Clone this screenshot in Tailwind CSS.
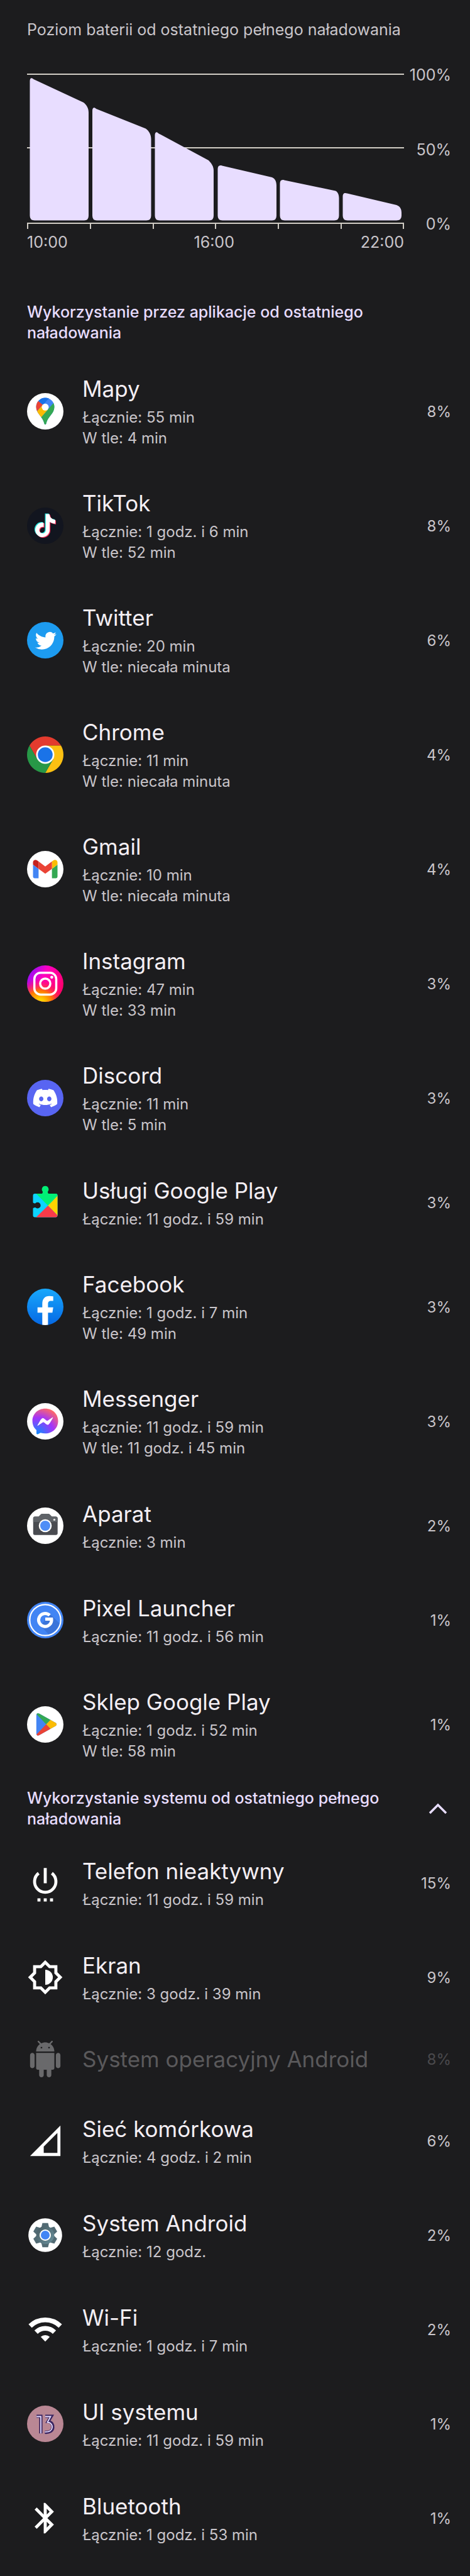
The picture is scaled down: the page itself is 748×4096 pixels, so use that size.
<!DOCTYPE html>
<html lang="pl">
<head>
  <meta charset="UTF-8">
  <meta name="viewport" content="width=device-width, initial-scale=1.0">
  <title>Wykorzystanie baterii</title>
  <script src="https://cdn.jsdelivr.net/npm/@tailwindcss/browser@4"></script>
</head>
<body class="min-h-screen bg-[#1c1c1e] font-[Inter,Roboto,sans-serif] text-2xl leading-[33px] text-[#c9c5ca]">
  <main class="pl-[43px] pr-[30px] pt-[31px]">

    <!-- Wykres baterii -->
    <h1 class="text-[25px]">Poziom baterii od ostatniego pełnego naładowania</h1>

    <section class="mt-[39px] flex text-[25px]" aria-label="Wykres poziomu baterii">
      <div class="grow pt-[14px]">
        <svg class="block w-full" viewBox="0 0 600 248" fill="none">
          <g stroke="#d0ccc4" stroke-width="2">
            <path d="M0 1H600M0 118H600M0 238H600" />
            <path d="M1 238V247M101 238V247M201 238V247M300 238V247M400 238V247M500 238V247M599 238V247" />
          </g>
          <g fill="#e8ddff">
            <path d="M4.500 12C4.500 7 7 6 10.500 9L90 46C95 50 98 55 98 62V226Q98 233.500 91 233.500H12Q4.500 233.500 4.500 226z" />
            <path d="M104 59C104 54 107 53 110 56L189 87.500C194 91 197.500 97 197.500 104V226Q197.500 233.500 190 233.500H111Q104 233.500 104 226z" />
            <path d="M203.500 98C203.500 93 206.500 92 209 95L289 138C294 143 297 148 297 154V226Q297 233.500 290 233.500H211Q203.500 233.500 203.500 226z" />
            <path d="M303.500 152C303.500 147 306 145 310.500 146.500L390 165C395 167 397 172 397 178V226Q397 233.500 390 233.500H311Q303.500 233.500 303.500 226z" />
            <path d="M402.500 175C402.500 170 405 168 409.500 169.500L491 186.500C495 188.500 496.500 193 496.500 198V226Q496.500 233.500 489 233.500H410Q402.500 233.500 402.500 226z" />
            <path d="M502.500 196C502.500 190.500 505 189 509.500 190.500L588 209C594 211 596 216 596 221V226Q596 233.500 588 233.500H510Q502.500 233.500 502.500 226z" />
          </g>
        </svg>
        <div class="mt-1 flex justify-between">
          <span>10:00</span>
          <span>16:00</span>
          <span>22:00</span>
        </div>
      </div>
      <div class="flex h-[270px] w-[75px] shrink-0 flex-col justify-between text-right">
        <span>100%</span>
        <span>50%</span>
        <span>0%</span>
      </div>
    </section>

    <!-- Aplikacje -->
    <h2 class="mt-[78px] max-w-[580px] text-[25px] font-medium text-[#e8ddff]">Wykorzystanie przez aplikacje od ostatniego naładowania</h2>

    <ul class="mt-[17px]">
      <li class="flex h-[182px] items-center gap-[30px]">
        <svg class="size-[58px] shrink-0" viewBox="0 0 58 58">
          <clipPath id="pin"><path d="M29 7.500A14.500 14.500 0 0 1 43.500 22C43.500 33 33 37 30.500 48.500Q30.200 50 29 50T27.500 48.500C25 37 14.500 33 14.500 22A14.500 14.500 0 0 1 29 7.500z" /></clipPath>
          <circle cx="29" cy="29" r="29" fill="#fff" />
          <g clip-path="url(#pin)">
            <path fill="#4285f4" d="M0 0H58V58H0z" />
            <path fill="#34a853" d="M46 11.500L18 43.500L29 58L58 40z" />
            <path fill="#fbbc04" d="M5 41L26 17.500L33 26.500L17 44.700z" />
            <path fill="#ea4335" d="M29 22L18.200 12.800L5 14V41L24.500 19z" />
            <path fill="#1a73e8" d="M18.200 12.800L25.500 18.800L36 7L20 0z" />
          </g>
          <circle cx="29" cy="22.300" r="5.500" fill="#fff" />
        </svg>
        <div class="grow">
          <h3 class="text-[35px] leading-[46px] text-[#f4eff4]">Mapy</h3>
          <p class="mt-1.5">Łącznie: 55 min</p>
          <p>W tle: 4 min</p>
        </div>
        <span>8%</span>
      </li>

      <li class="flex h-[182px] items-center gap-[30px]">
        <svg class="size-[58px] shrink-0" viewBox="0 0 58 58">
          <defs><path id="note" d="M12.525.02c1.310-.02 2.610-.01 3.910-.02.080 1.530.630 3.090 1.750 4.170 1.120 1.110 2.700 1.620 4.240 1.790v4.030c-1.440-.05-2.890-.35-4.200-.97-.57-.26-1.100-.59-1.620-.93-.01 2.920.01 5.840-.02 8.750-.08 1.400-.54 2.790-1.350 3.940-1.310 1.920-3.580 3.170-5.910 3.210-1.430.08-2.860-.31-4.080-1.030-2.020-1.190-3.440-3.370-3.650-5.710-.02-.5-.03-1-.01-1.490.18-1.900 1.120-3.720 2.580-4.960 1.660-1.440 3.980-2.130 6.150-1.720.02 1.480-.04 2.960-.04 4.440-.99-.32-2.150-.23-3.020.37-.63.41-1.110 1.040-1.360 1.750-.21.51-.15 1.070-.14 1.610.24 1.640 1.820 3.020 3.500 2.870 1.120-.01 2.190-.66 2.770-1.610.19-.33.4-.67.41-1.060.1-1.790.06-3.570.07-5.360.01-4.030-.01-8.050.02-12.070z" /></defs>
          <circle cx="29" cy="29" r="29" fill="#12151f" />
          <use href="#note" fill="#25e5de" transform="translate(9.500 9.500) scale(1.520)" />
          <use href="#note" fill="#f5305a" transform="translate(12 11.500) scale(1.520)" />
          <use href="#note" fill="#fff" transform="translate(10.800 10.500) scale(1.520)" />
        </svg>
        <div class="grow">
          <h3 class="text-[35px] leading-[46px] text-[#f4eff4]">TikTok</h3>
          <p class="mt-1.5">Łącznie: 1 godz. i 6 min</p>
          <p>W tle: 52 min</p>
        </div>
        <span>8%</span>
      </li>

      <li class="flex h-[182px] items-center gap-[30px]">
        <svg class="size-[58px] shrink-0" viewBox="0 0 58 58">
          <circle cx="29" cy="29" r="29" fill="#1d9bf0" />
          <path fill="#fff" transform="translate(12.800 12.800) scale(1.420)" d="M23.953 4.570a10 10 0 01-2.825.775 4.958 4.958 0 002.163-2.723c-.951.555-2.005.959-3.127 1.184a4.920 4.920 0 00-8.384 4.482C7.690 8.095 4.067 6.130 1.640 3.162a4.822 4.822 0 00-.666 2.475c0 1.710.870 3.213 2.188 4.096a4.904 4.904 0 01-2.228-.616v.060a4.923 4.923 0 003.946 4.827 4.996 4.996 0 01-2.212.085 4.936 4.936 0 004.604 3.417 9.867 9.867 0 01-6.102 2.105c-.390 0-.779-.023-1.170-.067a13.995 13.995 0 007.557 2.209c9.053 0 13.998-7.496 13.998-13.985 0-.210 0-.420-.015-.630A9.935 9.935 0 0024 4.590z" />
        </svg>
        <div class="grow">
          <h3 class="text-[35px] leading-[46px] text-[#f4eff4]">Twitter</h3>
          <p class="mt-1.5">Łącznie: 20 min</p>
          <p>W tle: niecała minuta</p>
        </div>
        <span>6%</span>
      </li>

      <li class="flex h-[182px] items-center gap-[30px]">
        <svg class="size-[58px] shrink-0" viewBox="0 0 58 58">
          <path fill="#e33b2e" d="M54.100 14.500A29 29 0 0 0 3.900 14.500L16.400 36.300L29 29V14.500z" />
          <path fill="#fcc012" d="M54.100 14.500A29 29 0 0 1 29 58L41.600 36.300L29 29V14.500z" />
          <path fill="#279847" d="M29 58A29 29 0 0 1 3.900 14.500L16.400 36.300L29 29L41.600 36.300z" />
          <circle cx="29" cy="29" r="14.500" fill="#fff" />
          <circle cx="29" cy="29" r="11.800" fill="#1a73e8" />
        </svg>
        <div class="grow">
          <h3 class="text-[35px] leading-[46px] text-[#f4eff4]">Chrome</h3>
          <p class="mt-1.5">Łącznie: 11 min</p>
          <p>W tle: niecała minuta</p>
        </div>
        <span>4%</span>
      </li>

      <li class="flex h-[182px] items-center gap-[30px]">
        <svg class="size-[58px] shrink-0" viewBox="0 0 58 58">
          <circle cx="29" cy="29" r="29" fill="#fff" />
          <g transform="translate(-13.500 -4.400) scale(.443)">
            <path fill="#4285f4" d="M58 108h14V74L52 59v43c0 3.320 2.690 6 6 6" />
            <path fill="#34a853" d="M120 108h14c3.320 0 6-2.690 6-6V59l-20 15" />
            <path fill="#fbbc04" d="M120 48v26l20-15v-8c0-7.420-8.470-11.650-14.400-7.200" />
            <path fill="#ea4335" d="M72 74V48l24 18 24-18v26L96 92" />
            <path fill="#c5221f" d="M52 51v8l20 15V48l-5.600-4.200c-5.940-4.450-14.400-.220-14.400 7.200" />
          </g>
        </svg>
        <div class="grow">
          <h3 class="text-[35px] leading-[46px] text-[#f4eff4]">Gmail</h3>
          <p class="mt-1.5">Łącznie: 10 min</p>
          <p>W tle: niecała minuta</p>
        </div>
        <span>4%</span>
      </li>

      <li class="flex h-[182px] items-center gap-[30px]">
        <svg class="size-[58px] shrink-0" viewBox="0 0 58 58">
          <defs>
            <linearGradient id="ig" x1="0" y1="0" x2="1" y2=".6"><stop offset=".1" stop-color="#8a10ff" /><stop offset=".45" stop-color="#ff00c0" /><stop offset="1" stop-color="#ff0069" /></linearGradient>
            <radialGradient id="ig2" cx=".35" cy="1.050" r=".7"><stop offset=".15" stop-color="#ffd600" /><stop offset=".5" stop-color="#ff7a00" /><stop offset="1" stop-color="#ff0069" stop-opacity="0" /></radialGradient>
          </defs>
          <circle cx="29" cy="29" r="29" fill="url(#ig)" />
          <circle cx="29" cy="29" r="29" fill="url(#ig2)" />
          <g fill="none" stroke="#fff" stroke-width="3.500">
            <rect x="11.700" y="11.700" width="34.800" height="34.800" rx="10" />
            <circle cx="29" cy="29" r="8.100" />
          </g>
          <circle cx="39.400" cy="18.800" r="2.400" fill="#fff" />
        </svg>
        <div class="grow">
          <h3 class="text-[35px] leading-[46px] text-[#f4eff4]">Instagram</h3>
          <p class="mt-1.5">Łącznie: 47 min</p>
          <p>W tle: 33 min</p>
        </div>
        <span>3%</span>
      </li>

      <li class="flex h-[182px] items-center gap-[30px]">
        <svg class="size-[58px] shrink-0" viewBox="0 0 58 58">
          <circle cx="29" cy="29" r="29" fill="#5865f2" />
          <path fill="#fff" transform="translate(9.800 9.600) scale(1.600)" d="M20.317 4.370a19.791 19.791 0 00-4.885-1.515.074.074 0 00-.079.037c-.211.375-.445.865-.608 1.250-1.845-.276-3.680-.276-5.487 0-.164-.393-.406-.874-.618-1.250a.077.077 0 00-.079-.037 19.736 19.736 0 00-4.885 1.515.070.070 0 00-.032.028C.533 9.046-.319 13.580.099 18.058a.082.082 0 00.031.056c2.053 1.508 4.041 2.423 5.993 3.029a.078.078 0 00.084-.028c.462-.630.873-1.295 1.226-1.994a.076.076 0 00-.042-.106c-.653-.248-1.274-.550-1.872-.892a.077.077 0 01-.008-.128c.126-.094.252-.192.372-.291a.074.074 0 01.078-.011c3.928 1.793 8.180 1.793 12.061 0a.074.074 0 01.079.010c.120.099.246.198.373.292a.077.077 0 01-.007.128 12.299 12.299 0 01-1.873.891.077.077 0 00-.041.107c.360.698.772 1.363 1.225 1.993a.076.076 0 00.084.029c1.961-.607 3.950-1.522 6.002-3.029a.077.077 0 00.031-.055c.500-5.177-.838-9.674-3.549-13.660a.061.061 0 00-.031-.029zM8.020 15.331c-1.183 0-2.157-1.086-2.157-2.419 0-1.333.956-2.419 2.157-2.419 1.211 0 2.176 1.095 2.157 2.419 0 1.333-.956 2.419-2.157 2.419zm7.975 0c-1.183 0-2.157-1.086-2.157-2.419 0-1.333.955-2.419 2.157-2.419 1.211 0 2.176 1.095 2.157 2.419 0 1.333-.946 2.419-2.157 2.419z" />
        </svg>
        <div class="grow">
          <h3 class="text-[35px] leading-[46px] text-[#f4eff4]">Discord</h3>
          <p class="mt-1.5">Łącznie: 11 min</p>
          <p>W tle: 5 min</p>
        </div>
        <span>3%</span>
      </li>

      <li class="flex h-[150px] items-center gap-[30px]">
        <svg class="size-[58px] shrink-0" viewBox="0 0 58 58">
          <clipPath id="puzzle"><rect x="9.500" y="15" width="39" height="37.500" rx="3" /></clipPath>
          <path fill="#00f076" d="M29 2.800a5.400 5.400 0 0 1 3.900 9.100Q32.700 14 35 16H23Q25.300 14 25.100 11.900A5.400 5.400 0 0 1 29 2.800z" />
          <g clip-path="url(#puzzle)">
            <path fill="#0cd3ff" d="M0 0H58V58H0z" />
            <path fill="#00f076" d="M14 14.500L33.400 34L53 14z" />
            <path fill="#ffd500" d="M33.400 34L53 14V54z" />
            <path fill="#f93a49" d="M33.400 34L53 54H13z" />
          </g>
          <path fill="#1c1c1e" d="M9 29Q11.500 31 13.300 30.200A4.900 4.900 0 1 1 13.300 37.100Q11.500 36.300 9 38.500z" />
        </svg>
        <div class="grow">
          <h3 class="text-[35px] leading-[46px] text-[#f4eff4]">Usługi Google Play</h3>
          <p class="mt-1.5">Łącznie: 11 godz. i 59 min</p>
        </div>
        <span>3%</span>
      </li>

      <li class="flex h-[182px] items-center gap-[30px]">
        <svg class="size-[58px] shrink-0" viewBox="0 0 58 58">
          <linearGradient id="fb" x1="0" y1="0" x2="0" y2="1"><stop stop-color="#18a8fc" /><stop offset="1" stop-color="#0568e4" /></linearGradient>
          <circle cx="29" cy="29" r="29" fill="url(#fb)" />
          <path fill="#fff" d="M24.300 57.600V38.200H16.700V29.700H24.300V24C24.300 16 28.500 11.700 35.500 11.700Q38.700 11.700 41.700 12.300V19.600H38.300C34.700 19.600 33.400 21.600 33.400 24.200V29.700H41.700L40.400 38.200H33.400V57.600Q29 58.300 24.300 57.600z" />
        </svg>
        <div class="grow">
          <h3 class="text-[35px] leading-[46px] text-[#f4eff4]">Facebook</h3>
          <p class="mt-1.5">Łącznie: 1 godz. i 7 min</p>
          <p>W tle: 49 min</p>
        </div>
        <span>3%</span>
      </li>

      <li class="flex h-[182px] items-center gap-[30px]">
        <svg class="size-[58px] shrink-0" viewBox="0 0 58 58">
          <radialGradient id="msg" cx=".2" cy="1" r="1.080"><stop stop-color="#0a8dff" /><stop offset=".6" stop-color="#a334fa" /><stop offset="1" stop-color="#ff6968" /></radialGradient>
          <circle cx="29" cy="29" r="29" fill="#fff" />
          <path fill="url(#msg)" d="M29 8.800C17.500 8.800 8.600 17.200 8.600 28.500C8.600 34.500 11 39.500 15 43V48.200Q15.300 50 17.200 49.400L21.500 47.300C24 48 26.500 48.300 29 48.300C40.500 48.300 49.500 39.900 49.500 28.500S40.500 8.800 29 8.800z" />
          <path fill="#fff" stroke="#fff" stroke-linejoin="round" d="M17 35.500L22.500 26Q24.500 23 27 25L31 28.300Q32 29 33 28.300L41 23L35.500 32.300Q33.500 35.300 31 33.400L27 30.200Q26 29.500 25 30.200z" />
        </svg>
        <div class="grow">
          <h3 class="text-[35px] leading-[46px] text-[#f4eff4]">Messenger</h3>
          <p class="mt-1.5">Łącznie: 11 godz. i 59 min</p>
          <p>W tle: 11 godz. i 45 min</p>
        </div>
        <span>3%</span>
      </li>

      <li class="flex h-[150px] items-center gap-[30px]">
        <svg class="size-[58px] shrink-0" viewBox="0 0 58 58">
          <circle cx="29" cy="29" r="29" fill="#fff" />
          <path fill="#494b50" d="M12.500 14.500H18.500L22 11Q23 9.900 24.500 9.900H33.500Q35 9.900 36 11L39.500 14.500H45.700Q48.700 14.500 48.700 17.500V41Q48.700 43.800 45.700 43.800H12.500Q9.800 43.800 9.800 41V17.500Q9.800 14.500 12.500 14.500z" />
          <path fill="#5f6368" d="M9.800 23V17.500Q9.800 14.500 12.500 14.500H18.500L22 11Q23 9.900 24.500 9.900H33.500Q35 9.900 36 11L39.500 14.500H45.700Q48.700 14.500 48.700 17.500V23z" />
          <circle cx="29" cy="29" r="10.300" fill="#fff" />
          <circle cx="29" cy="29" r="8" fill="#4f8ef6" />
          <circle cx="43.500" cy="19.400" r="1.700" fill="#e3e3e3" />
        </svg>
        <div class="grow">
          <h3 class="text-[35px] leading-[46px] text-[#f4eff4]">Aparat</h3>
          <p class="mt-1.5">Łącznie: 3 min</p>
        </div>
        <span>2%</span>
      </li>

      <li class="flex h-[150px] items-center gap-[30px]">
        <svg class="size-[58px] shrink-0" viewBox="0 0 58 58">
          <circle cx="29" cy="29" r="29" fill="#4285f4" />
          <path fill="#3a74da" d="M36.500 19.500L51.500 34A23 23 0 0 1 34 51.300L21 37.500L29 29z" />
          <g fill="none" stroke="#fff">
            <circle cx="29" cy="29" r="24.700" stroke-width="2.200" />
            <path stroke-width="5" d="M36 21.500A10.300 10.300 0 1 0 39 27.500H29" />
          </g>
        </svg>
        <div class="grow">
          <h3 class="text-[35px] leading-[46px] text-[#f4eff4]">Pixel Launcher</h3>
          <p class="mt-1.5">Łącznie: 11 godz. i 56 min</p>
        </div>
        <span>1%</span>
      </li>

      <li class="flex h-[182px] items-center gap-[30px]">
        <svg class="size-[58px] shrink-0" viewBox="0 0 58 58">
          <clipPath id="play"><path d="M14.800 14.500Q15.200 9.800 19.500 11.800L45.300 26.300Q49 29 45.300 31.600L19.500 46Q15.200 48 14.800 43.500z" /></clipPath>
          <circle cx="29" cy="29" r="29" fill="#fff" />
          <g clip-path="url(#play)">
            <path fill="#4285f4" d="M0 0H58V58H0z" />
            <path fill="#34a853" d="M14 11.500L30.500 28.800L42 17V0H14z" />
            <path fill="#fbbc04" d="M30.500 28.800L42 17H58V41H42z" />
            <path fill="#ea4335" d="M30.500 28.800L42 41V58H14V46z" />
          </g>
        </svg>
        <div class="grow">
          <h3 class="text-[35px] leading-[46px] text-[#f4eff4]">Sklep Google Play</h3>
          <p class="mt-1.5">Łącznie: 1 godz. i 52 min</p>
          <p>W tle: 58 min</p>
        </div>
        <span>1%</span>
      </li>
    </ul>

    <!-- System -->
    <button type="button" aria-expanded="true" class="flex w-full items-center justify-between py-2.5 pr-[6px] text-left text-[25px] font-medium text-[#e8ddff]">
      <span class="max-w-[580px]">Wykorzystanie systemu od ostatniego pełnego naładowania</span>
      <svg class="h-[18px] w-[30px] shrink-0" viewBox="0 0 30 18" fill="none" stroke="currentColor" stroke-width="3.500"><path d="M2 16L15 3L28 16" /></svg>
    </button>

    <ul>
      <li class="flex h-[150px] items-center gap-[30px]">
        <svg class="size-[58px] shrink-0 overflow-visible" viewBox="0 0 58 58" fill="none" stroke="#fff" stroke-width="4.800">
          <path d="M29 5.300V29.600M39.500 13.500A17 17 0 1 1 18.500 13.500" />
          <path d="M16.600 56H21.400M26.600 56H31.400M36.600 56H41.400" />
        </svg>
        <div class="grow">
          <h3 class="text-[35px] leading-[46px] text-[#f4eff4]">Telefon nieaktywny</h3>
          <p class="mt-1.5">Łącznie: 11 godz. i 59 min</p>
        </div>
        <span>15%</span>
      </li>

      <li class="flex h-[150px] items-center gap-[30px]">
        <svg class="size-[58px] shrink-0" viewBox="0 0 24 24" fill="#fff">
          <path d="M20 8.690V4h-4.690L12 .690 8.690 4H4v4.690L.690 12 4 15.310V20h4.690L12 23.310 15.310 20H20v-4.690L23.310 12 20 8.690zm-2 5.790V18h-3.520L12 20.480 9.520 18H6v-3.520L3.520 12 6 9.520V6h3.520L12 3.520 14.480 6H18v3.520L20.480 12 18 14.480zM12 7v10a5 5 0 0 0 0-10z" />
        </svg>
        <div class="grow">
          <h3 class="text-[35px] leading-[46px] text-[#f4eff4]">Ekran</h3>
          <p class="mt-1.5">Łącznie: 3 godz. i 39 min</p>
        </div>
        <span>9%</span>
      </li>

      <li class="flex h-[110px] items-center gap-[30px] text-[#4a494c]">
        <svg class="size-[58px] shrink-0" viewBox="0 0 24 24" fill="#69696b">
          <path d="M6 18c0 .550.450 1 1 1h1v3.500c0 .830.670 1.500 1.500 1.500s1.500-.670 1.500-1.500V19h2v3.500c0 .830.670 1.500 1.500 1.500s1.500-.670 1.500-1.500V19h1c.550 0 1-.450 1-1V8H6v10zM3.500 8C2.670 8 2 8.670 2 9.500v7c0 .830.670 1.500 1.500 1.500S5 17.330 5 16.500v-7C5 8.670 4.330 8 3.500 8zm17 0c-.830 0-1.500.670-1.500 1.500v7c0 .830.670 1.500 1.500 1.500s1.500-.670 1.500-1.500v-7c0-.830-.670-1.500-1.500-1.500zm-4.970-5.840l1.300-1.300c.200-.200.200-.510 0-.710-.200-.200-.510-.200-.710 0l-1.480 1.480C13.850 1.230 12.950 1 12 1c-.960 0-1.860.230-2.660.630L7.850.150c-.200-.200-.510-.200-.710 0-.200.200-.200.510 0 .710l1.310 1.310C6.970 3.260 6 5.010 6 7h12c0-1.990-.970-3.750-2.470-4.840zM10 5H9V4h1v1zm5 0h-1V4h1v1z" />
        </svg>
        <h3 class="grow text-[35px] leading-[46px] text-[#5a595b]">System operacyjny Android</h3>
        <span>8%</span>
      </li>

      <li class="flex h-[150px] items-center gap-[30px]">
        <svg class="size-[58px] shrink-0" viewBox="0 0 24 24" fill="#fff" fill-rule="evenodd">
          <path d="M2 22H22V2zM11 20V15.800L20 6.800V20z" />
        </svg>
        <div class="grow">
          <h3 class="text-[35px] leading-[46px] text-[#f4eff4]">Sieć komórkowa</h3>
          <p class="mt-1.5">Łącznie: 4 godz. i 2 min</p>
        </div>
        <span>6%</span>
      </li>

      <li class="flex h-[150px] items-center gap-[30px]">
        <svg class="size-[58px] shrink-0" viewBox="0 0 58 58">
          <defs>
            <linearGradient id="gear" gradientUnits="userSpaceOnUse" x1="-14" y1="-10" x2="14" y2="14"><stop stop-color="#4a5f66" /><stop offset="1" stop-color="#69909c" /></linearGradient>
            <path id="tooth" d="M-4.500 -19.300H4.500L6 -13L9 -10H-9L-6 -13z" />
          </defs>
          <circle cx="29" cy="29" r="26.800" fill="#fff" />
          <g transform="translate(29 29)" fill="#526b74">
            <use href="#tooth" />
            <use href="#tooth" transform="rotate(60)" />
            <use href="#tooth" transform="rotate(120)" />
            <use href="#tooth" transform="rotate(180)" />
            <use href="#tooth" transform="rotate(240)" />
            <use href="#tooth" transform="rotate(300)" />
            <circle r="14.300" fill="url(#gear)" />
          </g>
          <circle cx="29" cy="29" r="9" fill="#fff" />
          <circle cx="29" cy="29" r="7" fill="#4285f4" />
        </svg>
        <div class="grow">
          <h3 class="text-[35px] leading-[46px] text-[#f4eff4]">System Android</h3>
          <p class="mt-1.5">Łącznie: 12 godz.</p>
        </div>
        <span>2%</span>
      </li>

      <li class="flex h-[150px] items-center gap-[30px]">
        <svg class="size-[58px] shrink-0" viewBox="0 0 58 58" fill="none" stroke="#fff" stroke-width="7.500">
          <path d="M5 23.500A34.500 34.500 0 0 1 53 23.500M14.400 33.200A21 21 0 0 1 43.600 33.200" />
          <path fill="#fff" stroke="none" d="M29 48.300L21.800 40.800A10.400 10.400 0 0 1 36.200 40.800z" />
        </svg>
        <div class="grow">
          <h3 class="text-[35px] leading-[46px] text-[#f4eff4]">Wi-Fi</h3>
          <p class="mt-1.5">Łącznie: 1 godz. i 7 min</p>
        </div>
        <span>2%</span>
      </li>

      <li class="flex h-[150px] items-center gap-[30px]">
        <svg class="size-[58px] shrink-0" viewBox="0 0 58 58">
          <circle cx="29" cy="29" r="29" fill="#b98794" />
          <g fill="none">
            <path stroke="#3a2560" stroke-width="5.200" d="M15.200 17H22V44.200M29 17H38.500L33.500 25.500C39.500 26 41.500 31 41 35C40.500 40 36 43 28.500 42.500" />
            <path stroke="#e6dcff" stroke-width="1.800" d="M15.200 17.500H22V44.200M29 17.500H37.500L32.500 26.500C38.500 27 40.500 31 40 35C39.500 39.500 35 42 28.500 41.800" />
          </g>
        </svg>
        <div class="grow">
          <h3 class="text-[35px] leading-[46px] text-[#f4eff4]">UI systemu</h3>
          <p class="mt-1.5">Łącznie: 11 godz. i 59 min</p>
        </div>
        <span>1%</span>
      </li>

      <li class="flex h-[150px] items-center gap-[30px]">
        <svg class="size-[58px] shrink-0" viewBox="0 0 24 24" fill="#fff">
          <path d="M17.710 7.710L12 2h-1v7.590L6.410 5 5 6.410 10.590 12 5 17.590 6.410 19 11 14.410V22h1l5.710-5.710-4.300-4.290 4.300-4.290zM13 5.830l1.880 1.880L13 9.590V5.830zm1.880 10.460L13 18.170v-3.760l1.880 1.880z" />
        </svg>
        <div class="grow">
          <h3 class="text-[35px] leading-[46px] text-[#f4eff4]">Bluetooth</h3>
          <p class="mt-1.5">Łącznie: 1 godz. i 53 min</p>
        </div>
        <span>1%</span>
      </li>
    </ul>
  </main>
</body>
</html>
